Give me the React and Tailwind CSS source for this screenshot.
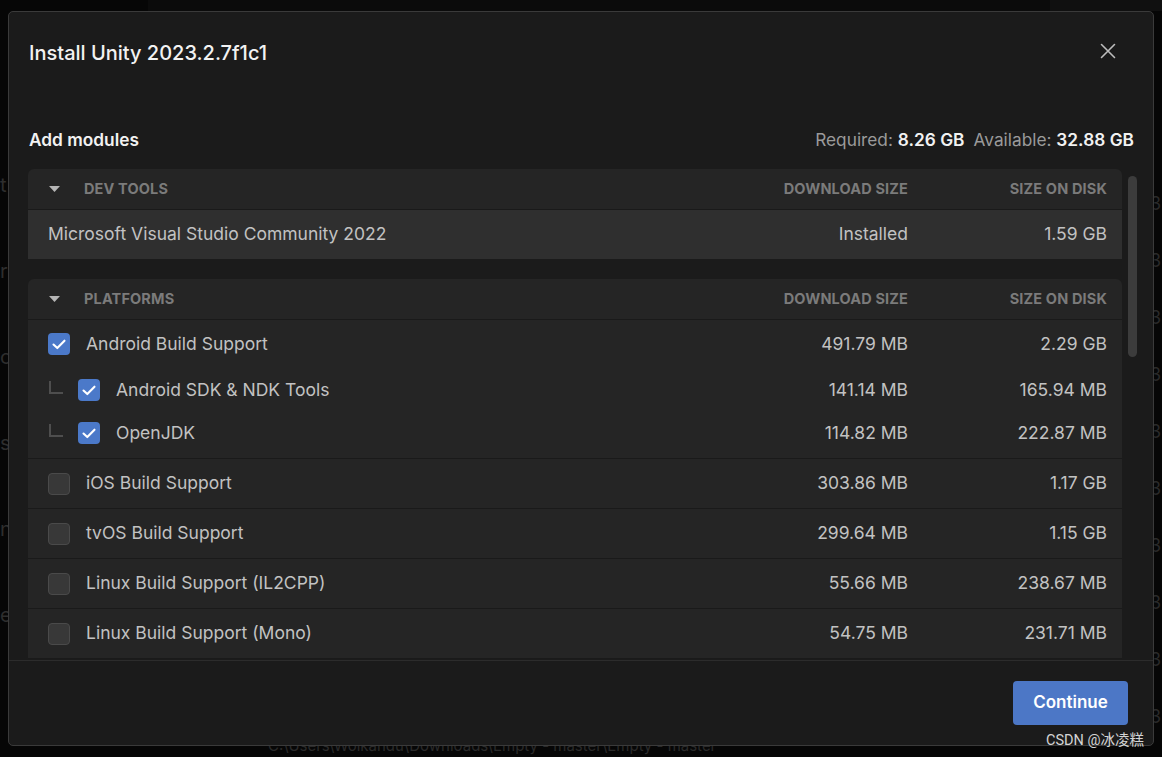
import React from 'react';

const font = { fontFamily: 'Inter, "Noto Sans", "Noto Sans CJK SC", sans-serif' };

const devTools = [{ name: 'Microsoft Visual Studio Community 2022', dl: 'Installed', disk: '1.59 GB' }];

const platforms = [
  { name: 'iOS Build Support', dl: '303.86 MB', disk: '1.17 GB' },
  { name: 'tvOS Build Support', dl: '299.64 MB', disk: '1.15 GB' },
  { name: 'Linux Build Support (IL2CPP)', dl: '55.66 MB', disk: '238.67 MB' },
  { name: 'Linux Build Support (Mono)', dl: '54.75 MB', disk: '231.71 MB' },
];

const Checkbox = ({ checked }) =>
  checked ? (
    <div className="w-[22px] h-[22px] rounded-[4px] bg-[#4b79c9] shrink-0">
      <svg width="22" height="22" viewBox="0 0 22 22" fill="none">
        <path d="M5.5 11.5l3.8 3.6 7.2-7.4" stroke="#fff" strokeWidth="2.1" strokeLinecap="round" strokeLinejoin="round" />
      </svg>
    </div>
  ) : (
    <div className="w-[22px] h-[22px] rounded-[4px] bg-[#383838] border border-[#4a4a4a] shrink-0" />
  );

const Caret = () => (
  <svg width="11" height="6" viewBox="0 0 11 6" className="shrink-0">
    <path d="M0 0h11L5.5 6z" fill="#b5b5b5" />
  </svg>
);

const SectionHeader = ({ title }) => (
  <div className="h-[41px] flex items-center pl-[21px] pr-[15px] bg-[#252525] rounded-t-[6px] border-b border-[#1a1a1a] text-[14.5px] font-bold text-[#7b7b7b] tracking-[0.01em]">
    <Caret />
    <span className="ml-[24px] flex-1">{title}</span>
    <span className="w-[200px] text-right">DOWNLOAD SIZE</span>
    <span className="w-[199px] text-right">SIZE ON DISK</span>
  </div>
);

const Sizes = ({ dl, disk }) => (
  <>
    <span className="w-[200px] text-right">{dl}</span>
    <span className="w-[199px] text-right">{disk}</span>
  </>
);

const TreeLine = () => (
  <div className="w-[14px] h-[13px] border-l-2 border-b-2 border-[#4e4e4e] mb-[6px] shrink-0" />
);

export default function App() {
  return (
    <div className="relative w-[1162px] h-[757px] bg-[#060606] overflow-hidden" style={font}>
      {/* background app, mostly hidden behind the modal */}
      <div className="absolute left-[148px] top-0 w-[902px] h-[11px] bg-[#0b0b0b]" />
      <div className="absolute left-[1050px] top-0 w-[112px] h-[11px] bg-[#101010]" />
      <div className="absolute left-0 top-[170px] flex flex-col gap-[56px] text-[20px] text-[#2e2e2e]">
        <span>t</span><span>r</span><span>c</span><span>s</span><span>n</span><span>e</span>
      </div>
      <div className="absolute left-[1150px] top-[190px] flex flex-col gap-[30px] text-[18px] text-[#2a2a2a]">
        <span>3</span><span>3</span><span>3</span><span>3</span><span>3</span><span>3</span><span>3</span><span>3</span><span>3</span><span>3</span>
      </div>
      <div className="absolute left-[268px] top-[735px] text-[15px] text-[#2a2a2a] whitespace-nowrap">
        C:\Users\Wolkandu\Downloads\Empty - master\Empty - master
      </div>

      {/* modal */}
      <div className="absolute left-[8px] top-[11px] w-[1146px] h-[735px] bg-[#1b1b1b] border border-[#3a3a3a] rounded-[5px] flex flex-col">
        <div className="px-[20px]">
          <div className="pt-[27px] flex items-center h-[55px]">
            <h1 className="flex-1 text-[20px] font-medium text-[#f2f2f2] leading-[28px]">Install Unity 2023.2.7f1c1</h1>
            <svg width="16" height="16" viewBox="0 0 16 16" className="mr-[17px] mb-[4px]">
              <path d="M1.5 1.5l13 13M14.5 1.5l-13 13" stroke="#bdbdbd" strokeWidth="1.6" strokeLinecap="round" />
            </svg>
          </div>
          <div className="mt-[61px] h-[24px] flex items-center justify-between">
            <span className="text-[17.3px] font-semibold text-[#f2f2f2]">Add modules</span>
            <span className="text-[17.3px] text-[#9a9a9a] mr-[-1px]">
              Required: <b className="font-semibold text-[#f2f2f2]">8.26 GB</b>
              <span className="ml-[9px]">Available: </span>
              <b className="font-semibold text-[#f2f2f2]">32.88 GB</b>
            </span>
          </div>
        </div>

        <div className="mt-[17px] h-[491px] flex pl-[19px]">
          <div className="w-[1094px] overflow-hidden text-[17.5px] text-[#c2c2c2]">
            <SectionHeader title="DEV TOOLS" />
            {devTools.map((r) => (
              <div key={r.name} className="h-[49px] flex items-center pl-[20px] pr-[15px] bg-[#2f2f2f]">
                <span className="flex-1">{r.name}</span>
                <Sizes dl={r.dl} disk={r.disk} />
              </div>
            ))}

            <div className="h-[20px]" />

            <SectionHeader title="PLATFORMS" />
            <div className="bg-[#252525] pb-[4px] border-b border-[#1a1a1a]">
              <div className="h-[48px] flex items-center pl-[20px] pr-[15px]">
                <Checkbox checked />
                <span className="ml-[16px] flex-1">Android Build Support</span>
                <Sizes dl="491.79 MB" disk="2.29 GB" />
              </div>
              <div className="h-[44px] flex items-center pl-[21px] pr-[15px]">
                <TreeLine />
                <div className="ml-[15px]"><Checkbox checked /></div>
                <span className="ml-[16px] flex-1">Android SDK &amp; NDK Tools</span>
                <Sizes dl="141.14 MB" disk="165.94 MB" />
              </div>
              <div className="h-[42px] flex items-center pl-[21px] pr-[15px]">
                <TreeLine />
                <div className="ml-[15px]"><Checkbox checked /></div>
                <span className="ml-[16px] flex-1">OpenJDK</span>
                <Sizes dl="114.82 MB" disk="222.87 MB" />
              </div>
            </div>
            {platforms.map((r) => (
              <div key={r.name} className="h-[50px] flex items-center pl-[20px] pr-[15px] bg-[#252525] border-b border-[#1a1a1a]">
                <Checkbox />
                <span className="ml-[16px] flex-1">{r.name}</span>
                <Sizes dl={r.dl} disk={r.disk} />
              </div>
            ))}
          </div>
          <div className="ml-[6px] pt-[7px]">
            <div className="w-[9px] h-[181px] rounded-full bg-[#3c3c3c]" />
          </div>
        </div>

        <div className="flex-1 border-t border-[#2c2c2c] flex justify-end items-start pt-[20px] pr-[25px]">
          <button className="w-[115px] h-[44px] rounded-[4px] bg-[#4c77c6] text-white text-[17px] font-semibold">
            Continue
          </button>
        </div>
      </div>

      <div className="absolute left-[1046px] top-[730px] text-[14.5px] text-[#d4d4d4] whitespace-nowrap" style={{ fontFamily: 'Roboto, "Noto Sans CJK SC", sans-serif' }}>
        CSDN @冰凌糕
      </div>
    </div>
  );
}
